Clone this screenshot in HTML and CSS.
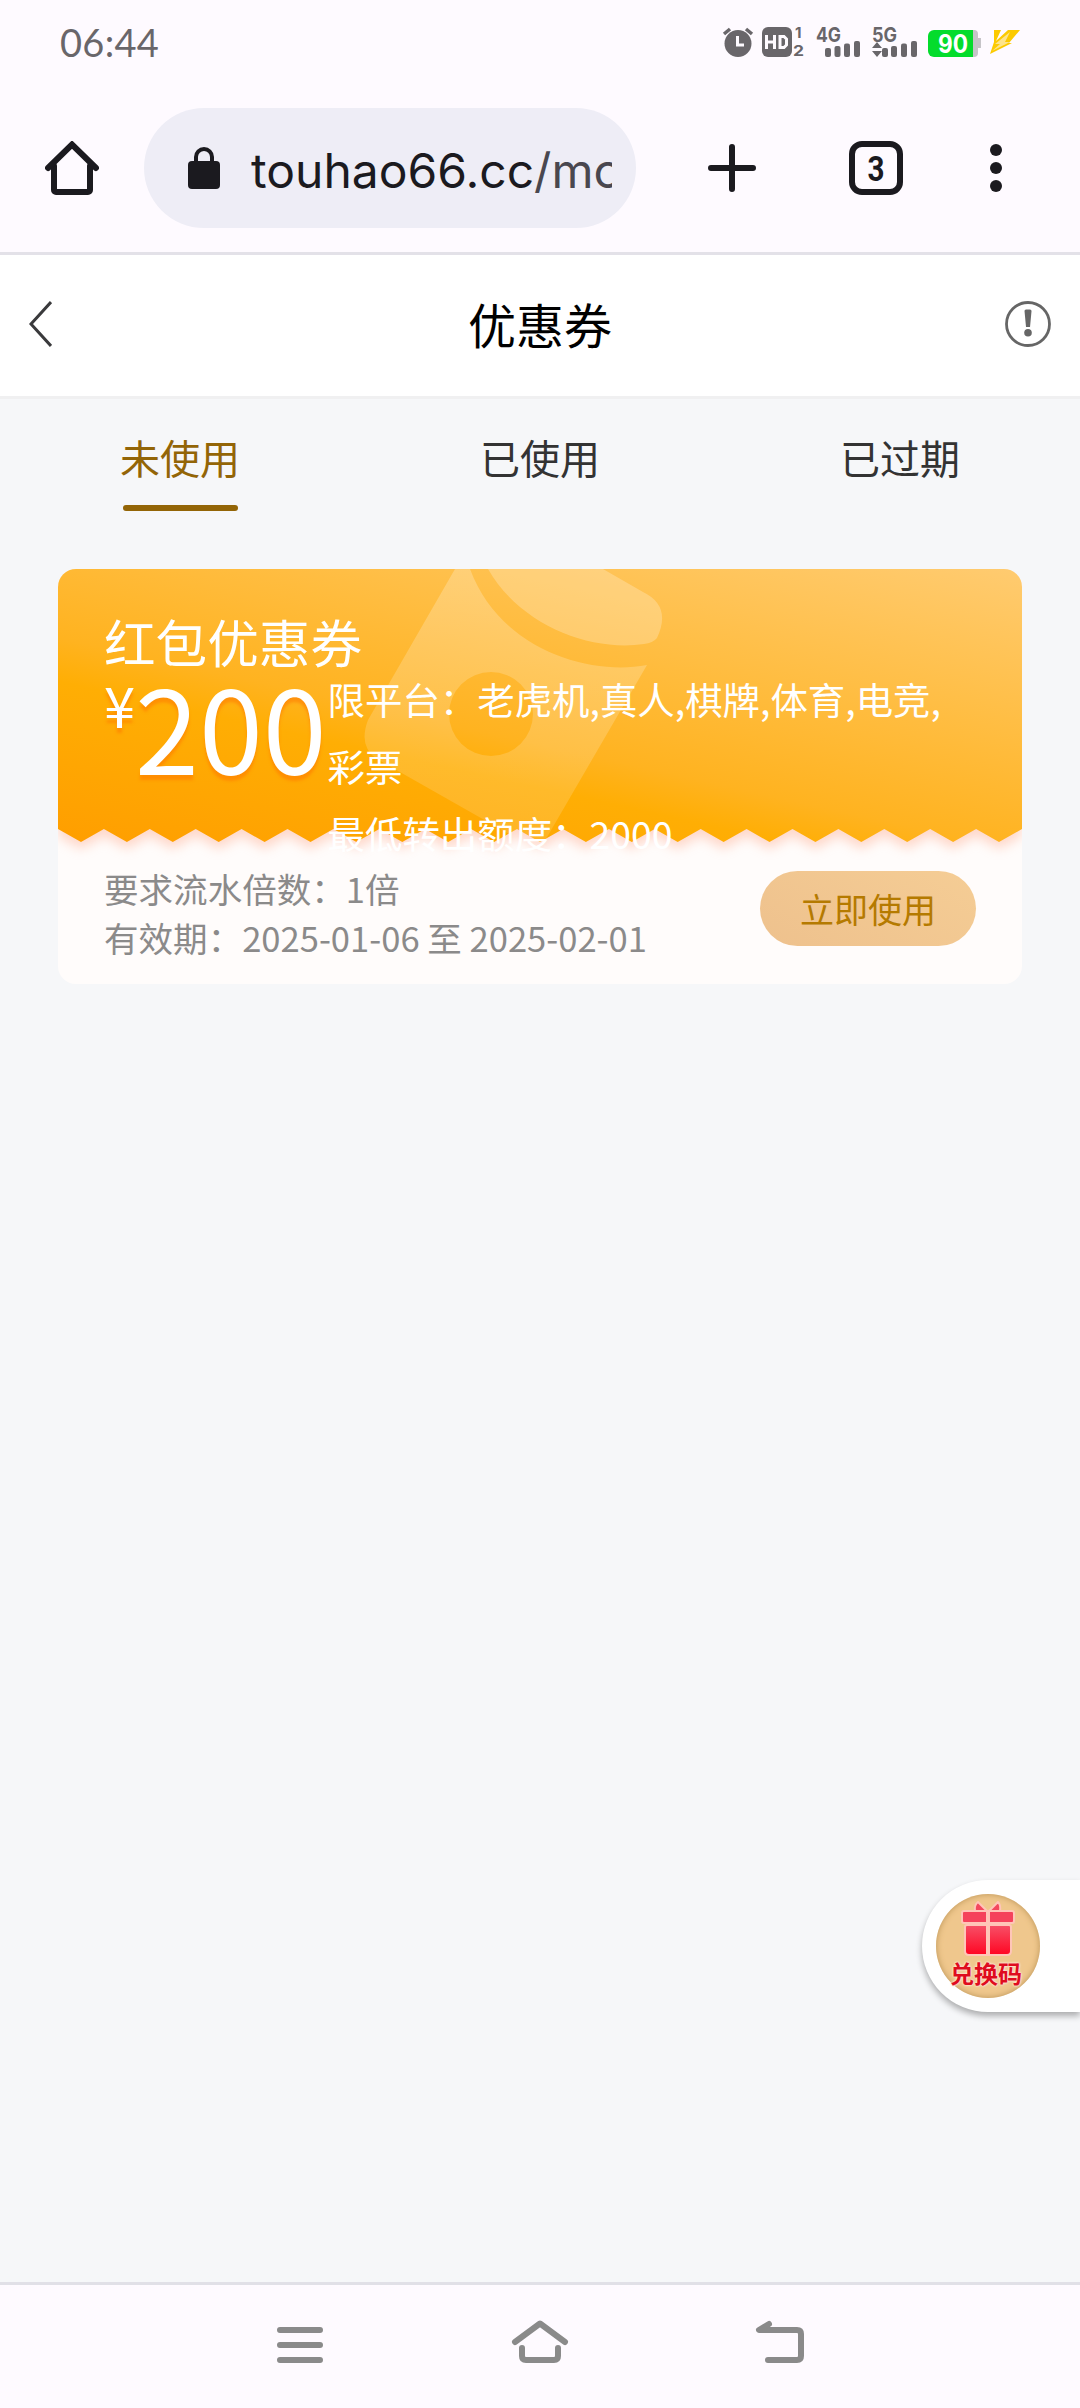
FILE: index.html
```html
<!DOCTYPE html>
<html lang="zh-CN">
<head>
<meta charset="utf-8">
<title>优惠券</title>
<link rel="stylesheet" href="styles.css">
</head>
<body>
<div class="statusbar">
  <span class="clock">06:44</span>
  <svg class="status-icons" width="300" height="36" viewBox="720 24 300 36" fill="#69666a">
    <circle cx="738" cy="43.500" r="13.500"/>
    <path d="M724 34l6-5M752 34l-6-5" stroke="#69666a" stroke-width="3.500"/>
    <path d="M737.500 36v9h6.500" fill="none" stroke="#fefaff" stroke-width="3"/>
    <rect x="762" y="27" width="30" height="30" rx="6"/>
    <path d="M766.500 35v14M774.500 35v14M766.500 42h8M780 36.500h4l2.500 2.500v6l-2.500 2.500h-4z" fill="none" stroke="#fefaff" stroke-width="3"/>
    <text x="795" y="38" class="st-sim">1</text>
    <text x="793" y="56" class="st-sim" textLength="11" lengthAdjust="spacingAndGlyphs">2</text>
    <text x="816" y="41.500" class="st-net" textLength="25" lengthAdjust="spacingAndGlyphs">4G</text>
    <g><rect x="825" y="48" width="6" height="9" rx="2"/><rect x="834.500" y="46" width="6" height="11" rx="2"/><rect x="844" y="43.500" width="6" height="13.500" rx="2"/><rect x="854" y="41" width="6" height="16" rx="2"/></g>
    <text x="872" y="41.500" class="st-net" textLength="25" lengthAdjust="spacingAndGlyphs">5G</text>
    <path d="M872 48l5-6 5 6zM872 51h10l-5 6z"/>
    <g><rect x="882" y="48" width="6" height="9" rx="2"/><rect x="891" y="46" width="6" height="11" rx="2"/><rect x="901" y="43.500" width="6" height="13.500" rx="2"/><rect x="911" y="41" width="6" height="16" rx="2"/></g>
    <path d="M970 30h4a4 4 0 0 1 4 4v4h3v10h-3v5a4 4 0 0 1-4 4h-4z" fill="#c6c4c8"/>
    <path d="M934 30h39v27h-39a6 6 0 0 1-6-6V36a6 6 0 0 1 6-6z" fill="#04dc2c"/>
    <text x="938" y="53" class="st-batt" textLength="30" lengthAdjust="spacingAndGlyphs">90</text>
    <path d="M994 30h7l-5 11 12-11h12l-11 13h3l-22 11 4-12z" fill="#fcca00"/>
    <path d="M992 51l8-7h-5l15-12-5 10h5z" fill="#fefaff" opacity=".55"/>
  </svg>
</div>

<div class="toolbar">
  <svg class="home" width="54" height="54" viewBox="0 0 54 54" fill="none" stroke="#1b1a1f" stroke-width="6" stroke-linecap="round" stroke-linejoin="round"><path d="M9 25v24a2 2 0 0 0 2 2h32a2 2 0 0 0 2-2V25"/><path d="M3 27L27 3.500 51 27" stroke-linejoin="miter"/></svg>
  <div class="address">
    <svg width="32" height="42" viewBox="0 0 32 42"><rect y="14" width="32" height="28" rx="4" fill="#1b1a1f"/><path d="M8 16V10a8 8 0 0 1 16 0v6" fill="none" stroke="#1b1a1f" stroke-width="4"/></svg>
    <div class="url">touhao66.cc<span>/mo</span></div>
  </div>
  <svg class="plus" width="48" height="48" viewBox="0 0 48 48" stroke="#1b1a1f" stroke-width="6" stroke-linecap="round"><path d="M24 3v42M3 24h42"/></svg>
  <svg class="tabcount" width="54" height="54" viewBox="0 0 54 54"><rect x="3" y="3" width="48" height="48" rx="10" fill="none" stroke="#1b1a1f" stroke-width="6"/><text x="18.500" y="39.500" textLength="17" lengthAdjust="spacingAndGlyphs">3</text></svg>
  <svg class="dots" width="12" height="48" viewBox="0 0 12 48" fill="#1b1a1f"><circle cx="6" cy="6" r="6"/><circle cx="6" cy="24" r="6"/><circle cx="6" cy="42" r="6"/></svg>
</div>

<header class="header">
  <svg width="23" height="46" viewBox="0 0 23 46" fill="none" stroke="#3a3a3c" stroke-width="3"><path d="M22 1L2 23l20 22"/></svg>
  <h1>优惠券</h1>
  <svg width="46" height="46" viewBox="0 0 46 46"><circle cx="23" cy="23" r="21.500" fill="none" stroke="#666" stroke-width="2.800"/><path d="M19.500 10q0-1.500 1.500-1.500h4q1.500 0 1.500 1.500l-1.500 16h-4z" fill="#666"/><circle cx="23" cy="31.800" r="3.800" fill="#666"/></svg>
</header>

<nav class="tabs">
  <div class="tab active">未使用</div>
  <div class="tab">已使用</div>
  <div class="tab">已过期</div>
</nav>

<main>
  <section class="coupon">
    <svg class="coupon-bg" width="964" height="415" viewBox="58 569 964 415">
      <defs>
        <linearGradient id="orange" gradientUnits="userSpaceOnUse" x1="58" y1="842" x2="161" y2="378">
          <stop offset="0" stop-color="#ff9e00"/><stop offset=".33" stop-color="#ffae04"/><stop offset=".42" stop-color="#ffb320"/><stop offset="1" stop-color="#ffcb70"/>
        </linearGradient>
        <linearGradient id="body" gradientUnits="userSpaceOnUse" x1="530" y1="569" x2="500" y2="842">
          <stop offset="0" stop-color="#fff" stop-opacity=".24"/><stop offset="1" stop-color="#fff" stop-opacity=".13"/>
        </linearGradient>
        <clipPath id="ticket"><path id="edge" d="M58 569H1022V829L999 842 976.100 829 953.100 842 930.200 829 907.200 842 884.300 829 861.300 842 838.400 829 815.400 842 792.500 829 769.500 842 746.600 829 723.600 842 700.700 829 677.700 842 654.800 829 631.800 842 608.900 829 585.900 842 563 829 540 842 517 829 494.100 842 471.100 829 448.200 842 425.200 829 402.300 842 379.300 829 356.400 842 333.400 829 310.500 842 287.500 829 264.600 842 241.600 829 218.700 842 195.700 829 172.800 842 149.800 829 126.900 842 103.900 829 81 842 58 829z"/></clipPath>
        <filter id="soft" x="-5%" y="-10%" width="110%" height="130%"><feGaussianBlur stdDeviation="6"/></filter>
      </defs>
      <rect x="58" y="569" width="964" height="415" fill="#fffcfb"/>
      <use href="#edge" transform="translate(0 7)" fill="#ffb9a0" opacity=".55" filter="url(#soft)"/>
      <use href="#edge" fill="url(#orange)"/>
      <g clip-path="url(#ticket)">
        <path fill="url(#body)" fill-rule="evenodd" d="M455 569L368 720Q358 747 377 759L525 843Q541 850 550 832L647 665C590 676 500 650 470 569zM533 714a42 42 0 1 0-84 0 42 42 0 0 0 84 0z"/>
        <path fill="#fff" fill-opacity=".24" d="M488 569C520 625 590 652 644 644Q653 643 657 638Q672 606 643 592L603 569z"/>
      </g>
    </svg>
    <div class="coupon-top">
      <h2>红包优惠券</h2>
      <div class="coupon-info">
        <div class="amount"><span>¥</span><b>200</b></div>
        <div class="limits"><p>限平台：老虎机,真人,棋牌,体育,电竞,彩票</p><p>最低转出额度：2000</p></div>
      </div>
    </div>
    <div class="coupon-bottom">
      <div class="terms"><p>要求流水倍数：1倍</p><p>有效期：2025-01-06 至 2025-02-01</p></div>
      <button class="use">立即使用</button>
    </div>
  </section>
</main>

<div class="redeem">
  <div class="badge">
    <svg width="56" height="58" viewBox="0 0 56 58">
      <defs><linearGradient id="gift" x1="0" y1="0" x2="0" y2="1"><stop offset="0" stop-color="#f75068"/><stop offset="1" stop-color="#ff0522"/></linearGradient></defs>
      <g stroke="#ffc5b8" stroke-width="2" stroke-linejoin="round">
        <path d="M27 11H15q-1-6 3-9zM29 11h11q1-6-2-9z" fill="#f4485e"/>
        <rect x="2" y="11" width="52" height="12" rx="2" fill="#f5425c"/>
        <path d="M5 27q0-2 2-2h42q2 0 2 2v24q0 4-4 4H9q-4 0-4-4z" fill="url(#gift)"/>
        <path d="M28 11v44" stroke-width="4"/>
      </g>
    </svg>
    <span>兑换码</span>
  </div>
</div>

<footer class="navbar">
  <svg width="528" height="46" viewBox="276 2319 528 46" fill="none" stroke="#8a8a8a" stroke-width="6" stroke-linecap="round" stroke-linejoin="round">
    <path d="M280 2330h40M280 2345h40M280 2360h40"/>
    <path d="M515 2342L540 2323.500 565 2342M522 2348v8q0 4 4 4h28q4 0 4-4v-8"/>
    <path d="M769 2324L759 2330H797q4 0 4 4v22q0 4-4 4H768"/>
  </svg>
</footer>
</body>
</html>
```
FILE: styles.css
```css
* { box-sizing: border-box; margin: 0; padding: 0; }
body {
  width: 1080px; height: 2408px; overflow: hidden; position: relative;
  display: flex; flex-direction: column;
  background: #f6f7f9; color: #333;
  font-family: "Noto Sans CJK SC", sans-serif;
}
svg { display: block; flex: none; }

.statusbar {
  height: 84px; padding: 0 60px; background: #fefaff;
  display: flex; justify-content: space-between; align-items: center;
}
.clock { font: 38px/84px Lato, sans-serif; color: #69666a; letter-spacing: .3px; }
.st-sim { font: bold 15px Inter, sans-serif; }
.st-net { font: bold 20px Inter, sans-serif; }
.st-batt { font: bold 25px Inter, sans-serif; fill: #fff; }

.toolbar {
  height: 171px; padding: 0 78px 0 45px; background: #fefaff;
  border-bottom: 3px solid #e3e1e8;
  display: flex; align-items: center;
}
.address {
  width: 492px; height: 120px; margin-left: 45px; padding: 0 24px 0 44px;
  border-radius: 60px; background: #eeedf6;
  display: flex; align-items: center; gap: 31px;
}
.url {
  flex: 1; overflow: hidden; white-space: nowrap; padding-top: 5px;
  font: 48px/64px Inter, sans-serif; color: #1b1a1f;
}
.url span { color: #49474f; }
.plus { margin-left: 72px; }
.tabcount { margin-left: 93px; font: bold 35px Roboto, sans-serif; fill: #1b1a1f; }
.dots { margin-left: 87px; }

.header {
  height: 144px; padding: 0 29px 3px; background: #fff;
  border-bottom: 3px solid #f0f0f1;
  display: flex; align-items: center; justify-content: space-between;
}
.header h1 { font-size: 48px; font-weight: 400; line-height: 60px; color: #000; padding: 0 0 2px 23px; }

.tabs { display: grid; grid-template-columns: repeat(3, 1fr); justify-items: center; }
.tab { height: 112px; padding-top: 29px; font-size: 40px; line-height: 58px; }
.tab.active { color: #936507; }
.tab.active::after { content: ""; display: block; width: 115px; height: 6px; margin: 19px auto 0; border-radius: 3px; background: #936507; }

main { padding: 58px 58px 0; }
.coupon { position: relative; height: 415px; border-radius: 18px; overflow: hidden; }
.coupon-bg { position: absolute; inset: 0; }
.coupon-top { position: relative; height: 295px; padding: 42px 46px 0; color: #fff; }
.coupon-top h2 { font-size: 51.600px; font-weight: 400; line-height: 60px; }
.coupon-info { display: flex; }
.amount { display: flex; height: 120px; text-shadow: 0 5px 3px rgba(255, 120, 0, .55); }
.amount span { font-size: 56px; line-height: 66px; }
.amount b { font-size: 115px; font-weight: 400; line-height: 108px; }
.limits { flex: 1; font-size: 37.440px; line-height: 67px; padding-left: 1px; margin-top: -5px; }
.coupon-bottom {
  position: relative; padding: 0 46px;
  display: flex; justify-content: space-between;
}
.terms { font-size: 34.560px; line-height: 49px; color: #8b8a8a; }
.use {
  width: 216px; height: 75px; margin-top: 7px; border: 0; border-radius: 38px;
  background: linear-gradient(30deg, #eec18d, #f5cd95);
  font: 34px/75px "Noto Sans CJK SC", sans-serif; color: #b57a00;
}

.redeem {
  position: absolute; right: 0; top: 1880px; width: 158px; height: 132px;
  padding: 14px 0 0 14px; background: #fff; border-radius: 66px 0 0 66px;
  box-shadow: 0 4px 6px rgba(0, 0, 0, .3);
}
.badge {
  width: 104px; height: 104px; padding-top: 6px; border-radius: 50%;
  background: #efc78d; box-shadow: inset 0 0 6px #b99255;
  display: flex; flex-direction: column; align-items: center;
}
.badge span {
  font-size: 24px; font-weight: 700; line-height: 28px; margin: 1px 4px 0 0; white-space: nowrap;
  color: #df0c1e; text-shadow: 0 0 2px #ffe3d5, 0 0 2px #ffe3d5, 0 0 3px #ffe3d5;
}

.navbar {
  height: 126px; margin-top: auto; background: #fefaff;
  border-top: 3px solid #e1e0e7; padding: 34px 276px 0;
}
```
